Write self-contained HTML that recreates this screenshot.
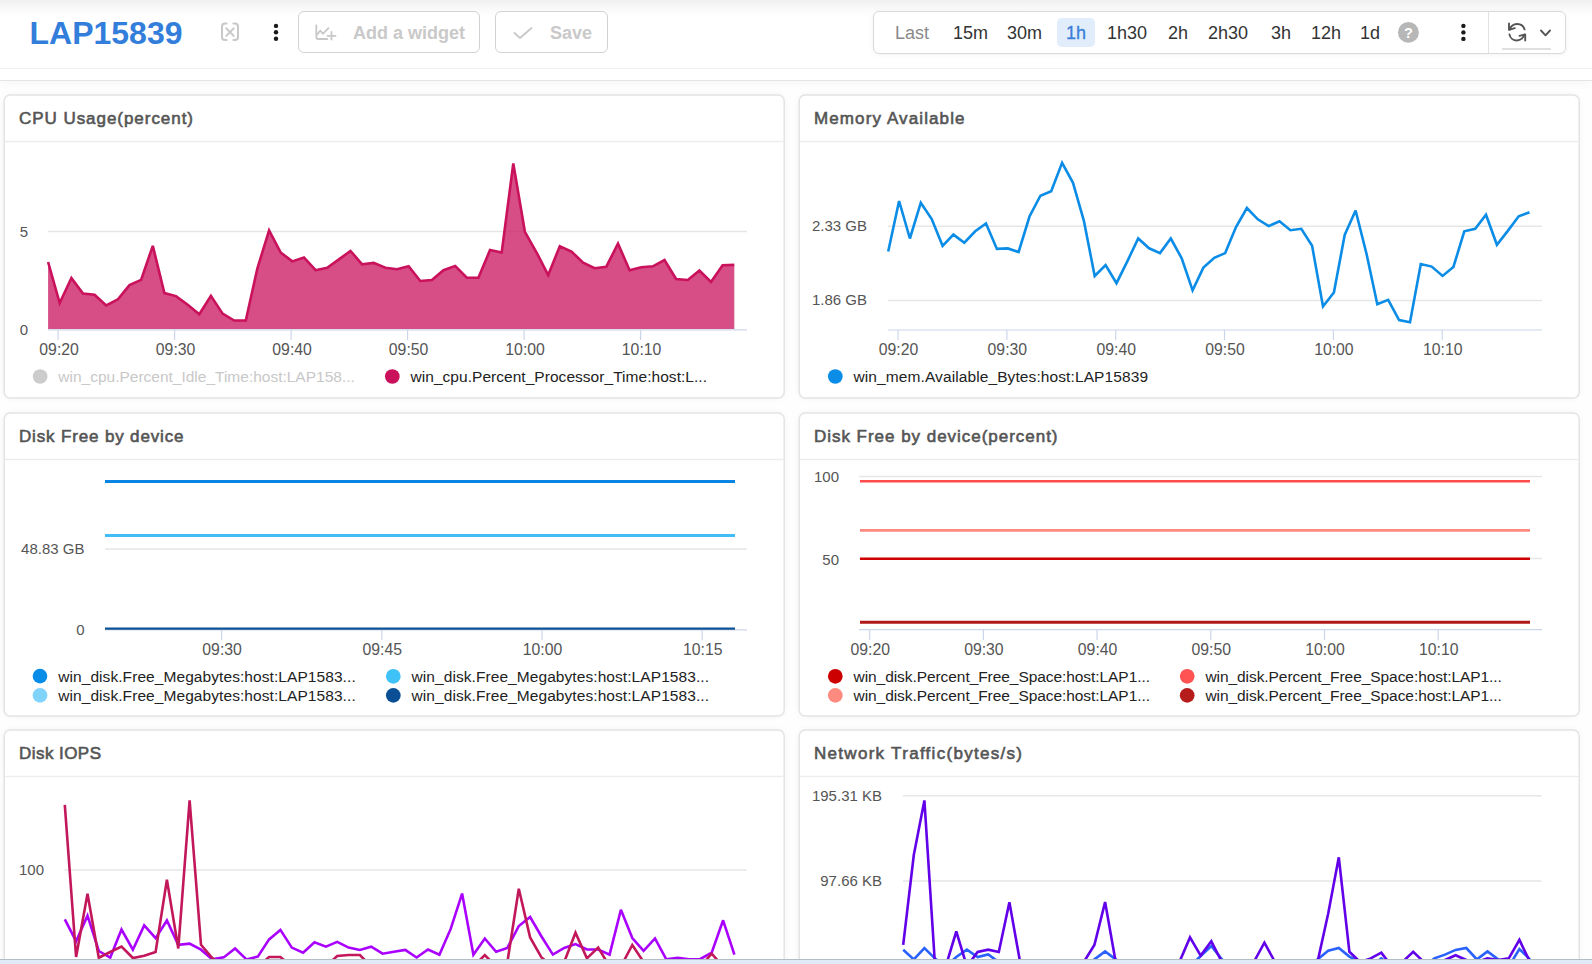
<!DOCTYPE html>
<html><head><meta charset="utf-8"><title>LAP15839</title>
<style>
html,body{margin:0;padding:0;}
body{width:1592px;height:964px;overflow:hidden;background:#fefefe;font-family:"Liberation Sans", sans-serif;position:relative;}
.top{position:absolute;left:0;top:0;width:1592px;height:80px;background:#fff;border-bottom:1px solid #e5e5e5;box-shadow:0 2px 10px rgba(0,0,0,0.035);}
.psh{position:absolute;border-radius:6px;background:#fff;box-shadow:0 0 7px rgba(0,0,0,0.05);}
.shadow{position:absolute;left:0;top:0;width:1592px;height:18px;background:linear-gradient(#efefef,#f6f6f6 30%,#fcfcfc 65%,#fff);}
.l68{position:absolute;left:0;top:68px;width:1592px;height:1px;background:#efefef;}
.abs{position:absolute;white-space:nowrap;}
.title{left:29.5px;top:15px;font-size:32px;font-weight:bold;color:#337edb;line-height:36px;}
.btn{position:absolute;top:11px;height:40px;border:1px solid #d2d2d2;border-radius:6px;background:#fff;}
.btxt{position:absolute;font-size:18px;font-weight:bold;color:#c9c9c9;line-height:20px;top:23px;}
.tbox{position:absolute;left:873px;top:11px;width:691px;height:41px;border:1px solid #dadada;border-radius:6px;background:#fff;box-shadow:0 1px 5px rgba(0,0,0,0.05);}
.ti{position:absolute;top:23px;font-size:18px;color:#333;line-height:20px;}
.hl{position:absolute;left:1057px;top:18px;width:38px;height:29px;background:#e2edfb;border-radius:5px;}
.bar{position:absolute;z-index:9;left:0;top:959px;width:1592px;height:5px;background:#e1ebf7;border-top:1px solid #b4bcc4;}
svg{position:absolute;left:0;top:0;}
text{font-family:"Liberation Sans", sans-serif;}
</style></head><body>
<div class="top"></div>
<div class="shadow"></div>
<div class="l68"></div>
<div class="abs title">LAP15839</div>
<svg width="1592" height="80" style="z-index:2">
  <!-- bracket x icon -->
  <g fill="none" stroke="#c8c8c8" stroke-width="2" stroke-linecap="round" stroke-linejoin="round">
    <path d="M226.6,23.6 H225 A3,3 0 0 0 222,26.6 V37 A3,3 0 0 0 225,40 H226.6"/>
    <path d="M233.4,23.6 H235 A3,3 0 0 1 238,26.6 V37 A3,3 0 0 1 235,40 H233.4"/>
    <path d="M226.3,28.4 L233.7,35.9 M233.7,28.4 L226.3,35.9"/>
  </g>
  <g fill="#1a1a1a"><circle cx="276" cy="25.9" r="2.2"/><circle cx="276" cy="32.3" r="2.2"/><circle cx="276" cy="38.7" r="2.2"/></g>
</svg>
<div class="btn" style="left:298px;width:180px;"></div>
<div class="btn" style="left:495px;width:111px;"></div>
<svg width="1592" height="80" style="z-index:3">
  <g fill="none" stroke="#c8c8c8" stroke-width="1.8" stroke-linecap="round" stroke-linejoin="round">
    <path d="M316.3,25.3 V37 Q316.3,39 318.3,39 H327.4"/>
    <path d="M317,34.6 L320.3,30.5 L322.8,33.8 L328.5,28.2"/>
    <path d="M327.5,35.8 H335.5 M331.5,31.8 V39.6"/>
    <path d="M514.5,33 L520,38 L531.5,28"/>
  </g>
</svg>
<div class="btxt" style="left:353px;">Add a widget</div>
<div class="btxt" style="left:550px;">Save</div>
<div class="tbox"></div>
<div class="abs" style="left:1488px;top:12px;width:1px;height:41px;background:#e2e2e2;"></div>
<div class="hl"></div>
<div class="ti" style="left:895px;color:#8a8a8a;">Last</div>
<div class="ti" style="left:953px;">15m</div>
<div class="ti" style="left:1007px;">30m</div>
<div class="ti" style="left:1066px;color:#3a7fd8;-webkit-text-stroke:0.35px #3a7fd8;">1h</div>
<div class="ti" style="left:1107px;">1h30</div>
<div class="ti" style="left:1168px;">2h</div>
<div class="ti" style="left:1208px;">2h30</div>
<div class="ti" style="left:1271px;">3h</div>
<div class="ti" style="left:1311px;">12h</div>
<div class="ti" style="left:1360px;">1d</div>
<svg width="1592" height="80" style="z-index:3">
  <circle cx="1408.4" cy="32.4" r="10.45" fill="#b7b7b7"/>
  <text x="1408.4" y="37.6" font-size="14.5" font-weight="bold" fill="#fff" text-anchor="middle">?</text>
  <g fill="#1a1a1a"><circle cx="1463.4" cy="25.9" r="2.2"/><circle cx="1463.4" cy="32.4" r="2.2"/><circle cx="1463.4" cy="38.9" r="2.2"/></g>
  <g fill="none" stroke="#555" stroke-width="1.9" stroke-linecap="round" stroke-linejoin="round">
    <path d="M1524.6,29.4 A7.7,7.7 0 0 0 1509.8,29.6"/>
    <path d="M1509,23.5 V29.8 L1514.8,28.2"/>
    <path d="M1509.4,34.4 A7.7,7.7 0 0 0 1524.4,34.6"/>
    <path d="M1525.2,40.6 V34.4 L1519.5,35.8"/>
    <path d="M1541,30.5 L1545.5,35.3 L1550,30.5"/>
  </g>
  <line x1="1502" y1="48.9" x2="1551" y2="48.9" stroke="#e0e0e0" stroke-width="2"/>
</svg>
<svg width="1592" height="964" style="z-index:1">
<rect x="4.2" y="95.0" width="780.0" height="303.0" rx="6" fill="#fff" stroke="#e4e4e4" stroke-width="1.5"/>
<line x1="5.0" y1="141.5" x2="784.0" y2="141.5" stroke="#ededed" stroke-width="1.5"/>
<text x="19" y="124.4" font-size="17" fill="#555" font-weight="normal" text-anchor="start" textLength="174" lengthAdjust="spacing" stroke="#555" stroke-width="0.6">CPU Usage(percent)</text>
<rect x="799.2" y="95.0" width="780.0" height="303.0" rx="6" fill="#fff" stroke="#e4e4e4" stroke-width="1.5"/>
<line x1="800.0" y1="141.5" x2="1579.0" y2="141.5" stroke="#ededed" stroke-width="1.5"/>
<text x="814" y="124.4" font-size="17" fill="#555" font-weight="normal" text-anchor="start" textLength="150.5" lengthAdjust="spacing" stroke="#555" stroke-width="0.6">Memory Available</text>
<rect x="4.2" y="413.0" width="780.0" height="303.0" rx="6" fill="#fff" stroke="#e4e4e4" stroke-width="1.5"/>
<line x1="5.0" y1="459.5" x2="784.0" y2="459.5" stroke="#ededed" stroke-width="1.5"/>
<text x="19" y="442.4" font-size="17" fill="#555" font-weight="normal" text-anchor="start" textLength="164.5" lengthAdjust="spacing" stroke="#555" stroke-width="0.6">Disk Free by device</text>
<rect x="799.2" y="413.0" width="780.0" height="303.0" rx="6" fill="#fff" stroke="#e4e4e4" stroke-width="1.5"/>
<line x1="800.0" y1="459.5" x2="1579.0" y2="459.5" stroke="#ededed" stroke-width="1.5"/>
<text x="814" y="442.4" font-size="17" fill="#555" font-weight="normal" text-anchor="start" textLength="243.5" lengthAdjust="spacing" stroke="#555" stroke-width="0.6">Disk Free by device(percent)</text>
<rect x="4.2" y="730.0" width="780.0" height="300.0" rx="6" fill="#fff" stroke="#e4e4e4" stroke-width="1.5"/>
<line x1="5.0" y1="776.5" x2="784.0" y2="776.5" stroke="#ededed" stroke-width="1.5"/>
<text x="19" y="759.4" font-size="17" fill="#555" font-weight="normal" text-anchor="start" textLength="82" lengthAdjust="spacing" stroke="#555" stroke-width="0.6">Disk IOPS</text>
<rect x="799.2" y="730.0" width="780.0" height="300.0" rx="6" fill="#fff" stroke="#e4e4e4" stroke-width="1.5"/>
<line x1="800.0" y1="776.5" x2="1579.0" y2="776.5" stroke="#ededed" stroke-width="1.5"/>
<text x="814" y="759.4" font-size="17" fill="#555" font-weight="normal" text-anchor="start" textLength="208" lengthAdjust="spacing" stroke="#555" stroke-width="0.6">Network Traffic(bytes/s)</text>
<line x1="48.0" y1="231.5" x2="747.0" y2="231.5" stroke="#e6e6e6" stroke-width="1.5"/>
<polygon points="48.1,329 48.1,262.0 59.7,303.0 71.4,278.0 83.0,293.6 94.6,294.8 106.2,305.5 117.9,299.3 129.5,285.1 141.1,279.9 152.8,245.8 164.4,293.1 176.0,296.1 187.7,304.8 199.3,314.3 210.9,295.8 222.6,313.6 234.2,320.5 245.8,320.5 257.4,268.3 269.1,230.4 280.7,252.5 292.3,261.4 304.0,257.4 315.6,270.2 327.2,267.9 338.9,259.4 350.5,250.9 362.1,264.3 373.7,262.9 385.4,267.7 397.0,269.3 408.6,266.3 420.3,281.0 431.9,280.0 443.5,270.2 455.2,265.9 466.8,277.7 478.4,277.7 490.0,250.1 501.7,252.5 513.3,163.4 524.9,231.8 536.6,252.5 548.2,275.1 559.8,246.2 571.5,251.5 583.1,262.7 594.7,268.2 606.3,266.7 618.0,243.6 629.6,270.2 641.2,267.2 652.9,266.3 664.5,260.0 676.1,279.0 687.8,280.0 699.4,270.6 711.0,282.0 722.6,265.3 734.3,264.9 734.3,329" fill="rgba(201,17,92,0.75)"/>
<polyline points="48.1,262.0 59.7,303.0 71.4,278.0 83.0,293.6 94.6,294.8 106.2,305.5 117.9,299.3 129.5,285.1 141.1,279.9 152.8,245.8 164.4,293.1 176.0,296.1 187.7,304.8 199.3,314.3 210.9,295.8 222.6,313.6 234.2,320.5 245.8,320.5 257.4,268.3 269.1,230.4 280.7,252.5 292.3,261.4 304.0,257.4 315.6,270.2 327.2,267.9 338.9,259.4 350.5,250.9 362.1,264.3 373.7,262.9 385.4,267.7 397.0,269.3 408.6,266.3 420.3,281.0 431.9,280.0 443.5,270.2 455.2,265.9 466.8,277.7 478.4,277.7 490.0,250.1 501.7,252.5 513.3,163.4 524.9,231.8 536.6,252.5 548.2,275.1 559.8,246.2 571.5,251.5 583.1,262.7 594.7,268.2 606.3,266.7 618.0,243.6 629.6,270.2 641.2,267.2 652.9,266.3 664.5,260.0 676.1,279.0 687.8,280.0 699.4,270.6 711.0,282.0 722.6,265.3 734.3,264.9" fill="none" stroke="#c9115c" stroke-width="2.6" stroke-linejoin="miter" stroke-miterlimit="3"/>
<line x1="48.0" y1="329.8" x2="747.0" y2="329.8" stroke="#ccd6eb" stroke-width="1.2"/>
<line x1="58.1" y1="330.0" x2="58.1" y2="340.0" stroke="#ccd6eb" stroke-width="1.2"/>
<text x="59.1" y="355" font-size="15.8" fill="#555" font-weight="normal" text-anchor="middle" >09:20</text>
<line x1="174.6" y1="330.0" x2="174.6" y2="340.0" stroke="#ccd6eb" stroke-width="1.2"/>
<text x="175.6" y="355" font-size="15.8" fill="#555" font-weight="normal" text-anchor="middle" >09:30</text>
<line x1="291.1" y1="330.0" x2="291.1" y2="340.0" stroke="#ccd6eb" stroke-width="1.2"/>
<text x="292.1" y="355" font-size="15.8" fill="#555" font-weight="normal" text-anchor="middle" >09:40</text>
<line x1="407.6" y1="330.0" x2="407.6" y2="340.0" stroke="#ccd6eb" stroke-width="1.2"/>
<text x="408.6" y="355" font-size="15.8" fill="#555" font-weight="normal" text-anchor="middle" >09:50</text>
<line x1="524.1" y1="330.0" x2="524.1" y2="340.0" stroke="#ccd6eb" stroke-width="1.2"/>
<text x="525.1" y="355" font-size="15.8" fill="#555" font-weight="normal" text-anchor="middle" >10:00</text>
<line x1="640.6" y1="330.0" x2="640.6" y2="340.0" stroke="#ccd6eb" stroke-width="1.2"/>
<text x="641.6" y="355" font-size="15.8" fill="#555" font-weight="normal" text-anchor="middle" >10:10</text>
<text x="28" y="236.8" font-size="15" fill="#555" font-weight="normal" text-anchor="end" >5</text>
<text x="28" y="334.5" font-size="15" fill="#555" font-weight="normal" text-anchor="end" >0</text>
<circle cx="40.1" cy="376.5" r="7.35" fill="#cccccc"/>
<text x="58.3" y="382.0" font-size="15.5" fill="#c8c8c8" font-weight="normal" text-anchor="start" textLength="296.5" lengthAdjust="spacing">win_cpu.Percent_Idle_Time:host:LAP158...</text>
<circle cx="392.3" cy="376.5" r="7.35" fill="#c9115c"/>
<text x="410.5" y="382.0" font-size="15.5" fill="#222" font-weight="normal" text-anchor="start" textLength="296.5" lengthAdjust="spacing">win_cpu.Percent_Processor_Time:host:L...</text>
<line x1="888.0" y1="226.2" x2="1542.0" y2="226.2" stroke="#e6e6e6" stroke-width="1.5"/>
<line x1="888.0" y1="300.6" x2="1542.0" y2="300.6" stroke="#e6e6e6" stroke-width="1.5"/>
<line x1="888.0" y1="330.0" x2="1542.0" y2="330.0" stroke="#ccd6eb" stroke-width="1.2"/>
<polyline points="888.2,251.5 899.1,201.0 909.9,238.5 920.8,202.7 931.7,219.0 942.6,245.8 953.4,234.6 964.3,242.7 975.2,231.3 986.0,223.5 996.9,248.9 1007.8,248.4 1018.6,252.0 1029.5,216.5 1040.4,195.7 1051.2,191.3 1062.1,162.8 1073.0,182.8 1083.9,220.9 1094.7,276.0 1105.6,265.1 1116.5,283.2 1127.3,261.4 1138.2,238.5 1149.1,248.3 1160.0,253.1 1170.8,238.5 1181.7,258.3 1192.6,290.4 1203.4,267.6 1214.3,257.8 1225.2,253.1 1236.0,227.1 1246.9,208.0 1257.8,219.3 1268.7,226.1 1279.5,221.3 1290.4,230.2 1301.3,228.8 1312.1,245.8 1323.0,306.5 1333.9,292.5 1344.7,235.0 1355.6,210.5 1366.5,253.7 1377.3,304.3 1388.2,299.8 1399.1,320.1 1410.0,322.2 1420.8,264.1 1431.7,266.6 1442.6,275.9 1453.4,267.0 1464.3,231.3 1475.2,228.8 1486.0,214.7 1496.9,244.8 1507.8,230.9 1518.7,216.3 1529.5,212.2" fill="none" stroke="#0b8ce6" stroke-width="2.6" stroke-linejoin="miter" stroke-miterlimit="3"/>
<line x1="898.0" y1="330.0" x2="898.0" y2="340.0" stroke="#ccd6eb" stroke-width="1.2"/>
<text x="898.5" y="355" font-size="15.8" fill="#555" font-weight="normal" text-anchor="middle" >09:20</text>
<line x1="1006.9" y1="330.0" x2="1006.9" y2="340.0" stroke="#ccd6eb" stroke-width="1.2"/>
<text x="1007.35" y="355" font-size="15.8" fill="#555" font-weight="normal" text-anchor="middle" >09:30</text>
<line x1="1115.7" y1="330.0" x2="1115.7" y2="340.0" stroke="#ccd6eb" stroke-width="1.2"/>
<text x="1116.2" y="355" font-size="15.8" fill="#555" font-weight="normal" text-anchor="middle" >09:40</text>
<line x1="1224.5" y1="330.0" x2="1224.5" y2="340.0" stroke="#ccd6eb" stroke-width="1.2"/>
<text x="1225.05" y="355" font-size="15.8" fill="#555" font-weight="normal" text-anchor="middle" >09:50</text>
<line x1="1333.4" y1="330.0" x2="1333.4" y2="340.0" stroke="#ccd6eb" stroke-width="1.2"/>
<text x="1333.9" y="355" font-size="15.8" fill="#555" font-weight="normal" text-anchor="middle" >10:00</text>
<line x1="1442.2" y1="330.0" x2="1442.2" y2="340.0" stroke="#ccd6eb" stroke-width="1.2"/>
<text x="1442.75" y="355" font-size="15.8" fill="#555" font-weight="normal" text-anchor="middle" >10:10</text>
<text x="867" y="230.8" font-size="15" fill="#555" font-weight="normal" text-anchor="end" >2.33 GB</text>
<text x="867" y="305.1" font-size="15" fill="#555" font-weight="normal" text-anchor="end" >1.86 GB</text>
<circle cx="835.3" cy="376.5" r="7.35" fill="#0b8ce6"/>
<text x="853.5" y="382.0" font-size="15.5" fill="#222" font-weight="normal" text-anchor="start" textLength="294.5" lengthAdjust="spacing">win_mem.Available_Bytes:host:LAP15839</text>
<line x1="105.0" y1="549.0" x2="747.0" y2="549.0" stroke="#e6e6e6" stroke-width="1.5"/>
<line x1="105.0" y1="629.8" x2="747.0" y2="629.8" stroke="#ccd6eb" stroke-width="1.2"/>
<line x1="105.0" y1="481.5" x2="735.0" y2="481.5" stroke="#0984e3" stroke-width="3"/>
<line x1="105.0" y1="535.4" x2="735.0" y2="535.4" stroke="#43bdf5" stroke-width="3"/>
<line x1="105.0" y1="628.6" x2="735.0" y2="628.6" stroke="#0b5196" stroke-width="2.4"/>
<line x1="221.6" y1="630.0" x2="221.6" y2="640.0" stroke="#ccd6eb" stroke-width="1.2"/>
<text x="222.1" y="655" font-size="15.8" fill="#555" font-weight="normal" text-anchor="middle" >09:30</text>
<line x1="381.8" y1="630.0" x2="381.8" y2="640.0" stroke="#ccd6eb" stroke-width="1.2"/>
<text x="382.29999999999995" y="655" font-size="15.8" fill="#555" font-weight="normal" text-anchor="middle" >09:45</text>
<line x1="542.0" y1="630.0" x2="542.0" y2="640.0" stroke="#ccd6eb" stroke-width="1.2"/>
<text x="542.5" y="655" font-size="15.8" fill="#555" font-weight="normal" text-anchor="middle" >10:00</text>
<line x1="702.2" y1="630.0" x2="702.2" y2="640.0" stroke="#ccd6eb" stroke-width="1.2"/>
<text x="702.6999999999999" y="655" font-size="15.8" fill="#555" font-weight="normal" text-anchor="middle" >10:15</text>
<text x="84.5" y="554" font-size="15" fill="#555" font-weight="normal" text-anchor="end" >48.83 GB</text>
<text x="84.5" y="634.5" font-size="15" fill="#555" font-weight="normal" text-anchor="end" >0</text>
<circle cx="40.0" cy="676.1" r="7.35" fill="#078ce8"/>
<text x="58.2" y="681.6" font-size="15.5" fill="#222" font-weight="normal" text-anchor="start" textLength="297.5" lengthAdjust="spacing">win_disk.Free_Megabytes:host:LAP1583...</text>
<circle cx="40.0" cy="695.4" r="7.35" fill="#80d4fb"/>
<text x="58.2" y="700.9" font-size="15.5" fill="#222" font-weight="normal" text-anchor="start" textLength="297.5" lengthAdjust="spacing">win_disk.Free_Megabytes:host:LAP1583...</text>
<circle cx="393.3" cy="676.3" r="7.35" fill="#3ec2f7"/>
<text x="411.5" y="681.8" font-size="15.5" fill="#222" font-weight="normal" text-anchor="start" textLength="297.5" lengthAdjust="spacing">win_disk.Free_Megabytes:host:LAP1583...</text>
<circle cx="393.3" cy="695.4" r="7.35" fill="#0a4f96"/>
<text x="411.5" y="700.9" font-size="15.5" fill="#222" font-weight="normal" text-anchor="start" textLength="297.5" lengthAdjust="spacing">win_disk.Free_Megabytes:host:LAP1583...</text>
<line x1="859.0" y1="476.4" x2="1542.0" y2="476.4" stroke="#e6e6e6" stroke-width="1.5"/>
<line x1="859.0" y1="558.4" x2="1542.0" y2="558.4" stroke="#e6e6e6" stroke-width="1.5"/>
<line x1="859.0" y1="629.6" x2="1542.0" y2="629.6" stroke="#ccd6eb" stroke-width="1.2"/>
<line x1="860.0" y1="481.3" x2="1530.0" y2="481.3" stroke="#ff4d4d" stroke-width="2.6"/>
<line x1="860.0" y1="530.4" x2="1530.0" y2="530.4" stroke="#ff8a80" stroke-width="2.6"/>
<line x1="860.0" y1="558.8" x2="1530.0" y2="558.8" stroke="#d10000" stroke-width="2.6"/>
<line x1="860.0" y1="622.2" x2="1530.0" y2="622.2" stroke="#b01818" stroke-width="3"/>
<line x1="869.7" y1="630.0" x2="869.7" y2="640.0" stroke="#ccd6eb" stroke-width="1.2"/>
<text x="870.2" y="655" font-size="15.8" fill="#555" font-weight="normal" text-anchor="middle" >09:20</text>
<line x1="983.4" y1="630.0" x2="983.4" y2="640.0" stroke="#ccd6eb" stroke-width="1.2"/>
<text x="983.9000000000001" y="655" font-size="15.8" fill="#555" font-weight="normal" text-anchor="middle" >09:30</text>
<line x1="1097.1" y1="630.0" x2="1097.1" y2="640.0" stroke="#ccd6eb" stroke-width="1.2"/>
<text x="1097.6000000000001" y="655" font-size="15.8" fill="#555" font-weight="normal" text-anchor="middle" >09:40</text>
<line x1="1210.8" y1="630.0" x2="1210.8" y2="640.0" stroke="#ccd6eb" stroke-width="1.2"/>
<text x="1211.3000000000002" y="655" font-size="15.8" fill="#555" font-weight="normal" text-anchor="middle" >09:50</text>
<line x1="1324.5" y1="630.0" x2="1324.5" y2="640.0" stroke="#ccd6eb" stroke-width="1.2"/>
<text x="1325.0" y="655" font-size="15.8" fill="#555" font-weight="normal" text-anchor="middle" >10:00</text>
<line x1="1438.2" y1="630.0" x2="1438.2" y2="640.0" stroke="#ccd6eb" stroke-width="1.2"/>
<text x="1438.7" y="655" font-size="15.8" fill="#555" font-weight="normal" text-anchor="middle" >10:10</text>
<text x="839" y="481.5" font-size="15" fill="#555" font-weight="normal" text-anchor="end" >100</text>
<text x="839" y="564.5" font-size="15" fill="#555" font-weight="normal" text-anchor="end" >50</text>
<circle cx="835.3" cy="676.3" r="7.35" fill="#cc0000"/>
<text x="853.5" y="681.8" font-size="15.5" fill="#222" font-weight="normal" text-anchor="start" textLength="296.5" lengthAdjust="spacing">win_disk.Percent_Free_Space:host:LAP1...</text>
<circle cx="835.3" cy="695.4" r="7.35" fill="#ff8a80"/>
<text x="853.5" y="700.9" font-size="15.5" fill="#222" font-weight="normal" text-anchor="start" textLength="296.5" lengthAdjust="spacing">win_disk.Percent_Free_Space:host:LAP1...</text>
<circle cx="1187.2" cy="676.3" r="7.35" fill="#ff5252"/>
<text x="1205.4" y="681.8" font-size="15.5" fill="#222" font-weight="normal" text-anchor="start" textLength="296.5" lengthAdjust="spacing">win_disk.Percent_Free_Space:host:LAP1...</text>
<circle cx="1187.2" cy="695.4" r="7.35" fill="#b71c1c"/>
<text x="1205.4" y="700.9" font-size="15.5" fill="#222" font-weight="normal" text-anchor="start" textLength="296.5" lengthAdjust="spacing">win_disk.Percent_Free_Space:host:LAP1...</text>
<line x1="64.3" y1="870.0" x2="746.5" y2="870.0" stroke="#e6e6e6" stroke-width="1.5"/>
<polyline points="64.8,919.3 76.1,941.2 87.5,915.7 98.8,951.0 110.2,957.7 121.5,929.5 132.9,949.7 144.2,925.4 155.6,938.2 166.9,920.5 178.3,944.8 189.6,943.6 201.0,949.7 212.3,959.4 223.7,957.4 235.1,948.5 246.4,959.4 257.8,956.6 269.1,939.4 280.4,929.9 291.8,947.6 303.1,952.8 314.5,942.3 325.9,946.7 337.2,941.9 348.6,947.6 359.9,949.9 371.2,946.7 382.6,953.7 393.9,951.8 405.3,949.9 416.6,957.5 428.0,949.5 439.4,954.7 450.7,928.9 462.1,893.6 473.4,954.7 484.8,938.5 496.1,951.8 507.4,947.9 518.8,926.0 530.1,917.0 541.5,936.5 552.9,954.6 564.2,947.9 575.5,944.1 586.9,949.5 598.2,949.5 609.6,954.6 620.9,909.8 632.3,938.0 643.6,950.8 655.0,938.4 666.3,959.4 677.7,957.9 689.0,959.4 700.4,959.0 711.7,952.7 723.1,920.3 734.4,954.6" fill="none" stroke="#aa00ff" stroke-width="2.6" stroke-linejoin="miter" stroke-miterlimit="3"/>
<polyline points="64.8,804.8 76.1,957.0 87.5,893.8 98.8,957.7 110.2,952.0 121.5,946.5 132.9,958.0 144.2,955.7 155.6,952.0 166.9,879.8 178.3,948.5 189.6,800.4 201.0,944.8 212.3,958.0 223.7,966.5 235.1,966.5 246.4,966.5 257.8,966.5 269.1,957.0 280.4,957.0 291.8,966.5 303.1,966.5 314.5,966.5 325.9,966.5 337.2,956.0 348.6,955.0 359.9,955.0 371.2,966.5 382.6,966.5 393.9,966.5 405.3,966.5 416.6,966.5 428.0,966.5 439.4,966.5 450.7,966.5 462.1,966.5 473.4,966.5 484.8,955.2 496.1,966.5 507.4,962.0 518.8,888.8 530.1,937.4 541.5,957.5 552.9,966.5 564.2,962.0 575.5,932.7 586.9,958.4 598.2,947.6 609.6,966.5 620.9,966.5 632.3,945.0 643.6,962.0 655.0,966.5 666.3,966.5 677.7,966.5 689.0,966.5 700.4,966.5 711.7,953.7 723.1,966.5 734.4,966.5" fill="none" stroke="#c2185b" stroke-width="2.6" stroke-linejoin="miter" stroke-miterlimit="3"/>
<text x="44" y="875.3" font-size="15" fill="#555" font-weight="normal" text-anchor="end" >100</text>
<line x1="903.0" y1="795.8" x2="1541.5" y2="795.8" stroke="#e6e6e6" stroke-width="1.5"/>
<line x1="903.0" y1="881.0" x2="1541.5" y2="881.0" stroke="#e6e6e6" stroke-width="1.5"/>
<polyline points="903.2,949.7 913.8,959.4 924.4,948.0 935.1,958.6 945.7,966.5 956.3,957.0 966.9,949.7 977.6,957.0 988.2,954.5 998.8,962.0 1009.4,966.5 1020.1,966.5 1030.7,966.5 1041.3,966.5 1051.9,966.5 1062.6,966.5 1073.2,966.5 1083.8,966.5 1094.4,959.4 1105.1,951.4 1115.7,959.4 1126.3,966.5 1136.9,966.5 1147.6,966.5 1158.2,966.5 1168.8,966.5 1179.4,966.5 1190.0,966.5 1200.7,956.0 1211.3,946.0 1221.9,959.4 1232.5,966.5 1243.2,966.5 1253.8,966.5 1264.4,966.5 1275.0,966.5 1285.7,966.5 1296.3,966.5 1306.9,966.5 1317.5,959.4 1328.2,950.8 1338.8,947.9 1349.4,956.6 1360.0,962.0 1370.7,966.5 1381.3,958.4 1391.9,966.5 1402.5,966.5 1413.2,966.5 1423.8,966.5 1434.4,958.4 1445.0,954.6 1455.6,949.9 1466.3,948.0 1476.9,959.4 1487.5,951.4 1498.1,959.4 1508.8,966.5 1519.4,949.0 1530.0,959.4" fill="none" stroke="#2962ff" stroke-width="2.6" stroke-linejoin="miter" stroke-miterlimit="3"/>
<polyline points="903.2,944.8 913.8,855.0 924.4,800.4 935.1,966.5 945.7,966.5 956.3,931.5 966.9,966.5 977.6,952.0 988.2,949.7 998.8,952.0 1009.4,902.3 1020.1,962.0 1030.7,966.5 1041.3,966.5 1051.9,966.5 1062.6,966.5 1073.2,966.5 1083.8,962.0 1094.4,945.0 1105.1,902.1 1115.7,962.0 1126.3,966.5 1136.9,966.5 1147.6,966.5 1158.2,966.5 1168.8,966.5 1179.4,962.0 1190.0,937.4 1200.7,955.6 1211.3,941.3 1221.9,962.0 1232.5,966.5 1243.2,966.5 1253.8,962.0 1264.4,942.6 1275.0,962.0 1285.7,966.5 1296.3,966.5 1306.9,966.5 1317.5,962.0 1328.2,913.6 1338.8,857.3 1349.4,951.8 1360.0,962.0 1370.7,958.4 1381.3,952.7 1391.9,966.5 1402.5,962.0 1413.2,951.8 1423.8,962.0 1434.4,966.5 1445.0,960.0 1455.6,955.2 1466.3,960.0 1476.9,962.0 1487.5,958.4 1498.1,960.0 1508.8,958.4 1519.4,939.9 1530.0,962.0" fill="none" stroke="#6200ea" stroke-width="2.6" stroke-linejoin="miter" stroke-miterlimit="3"/>
<text x="882" y="801" font-size="15" fill="#555" font-weight="normal" text-anchor="end" >195.31 KB</text>
<text x="882" y="886.3" font-size="15" fill="#555" font-weight="normal" text-anchor="end" >97.66 KB</text>
</svg>
<div class="psh" style="left:4px;top:95px;width:780px;height:303px;"></div>
<div class="psh" style="left:799px;top:95px;width:780px;height:303px;"></div>
<div class="psh" style="left:4px;top:413px;width:780px;height:303px;"></div>
<div class="psh" style="left:799px;top:413px;width:780px;height:303px;"></div>
<div class="psh" style="left:4px;top:730px;width:780px;height:300px;"></div>
<div class="psh" style="left:799px;top:730px;width:780px;height:300px;"></div>
<div class="bar"></div>
</body></html>
